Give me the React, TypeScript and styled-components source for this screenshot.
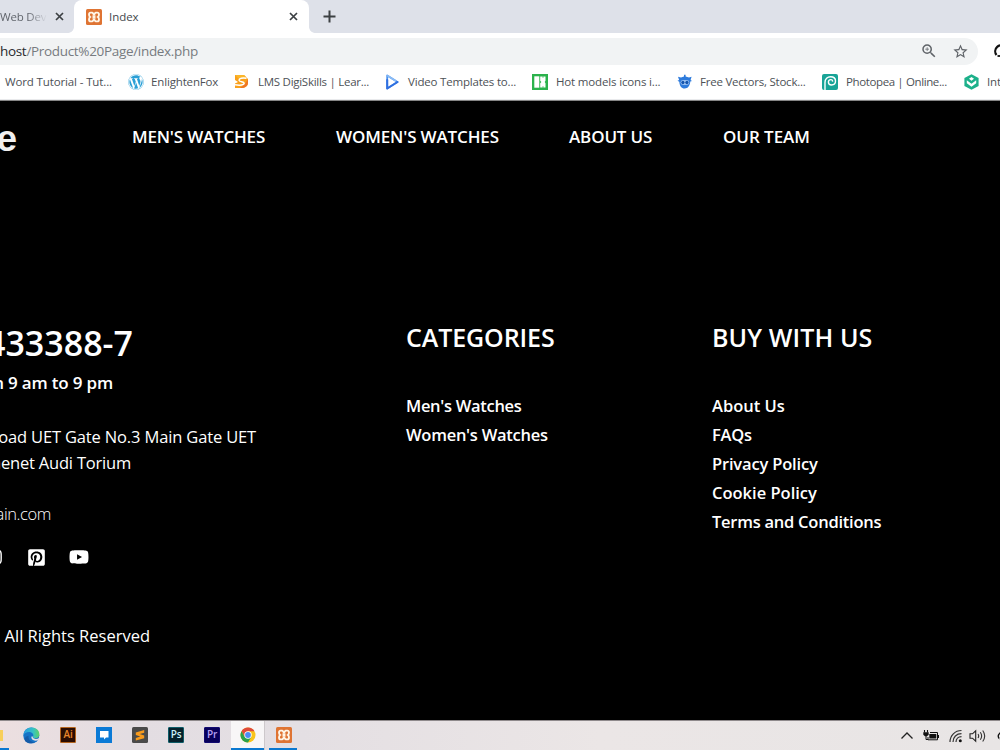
import React from "react";
import styled, { createGlobalStyle } from "styled-components";
import { FaInstagram, FaPinterestSquare, FaYoutube, FaWordpress } from "react-icons/fa";
import { MdOutlineZoomIn, MdStarBorder } from "react-icons/md";

const GlobalStyle = createGlobalStyle`
  * { box-sizing: border-box; }
  body {
    margin: 0;
    overflow: hidden;
    background: #000;
    font-family: "Open Sans", "Noto Sans", sans-serif;
  }
  svg { display: block; flex: none; }
`;

const Screen = styled.div`
  width: 1000px;
  height: 750px;
  display: flex;
  flex-direction: column;
  overflow: hidden;
`;

/* ---------- browser ---------- */

const TabStrip = styled.div`
  height: 33px;
  display: flex;
  background: #dee1e9;
  flex: none;
`;

const Tab = styled.div<{ $active?: boolean; $width: number }>`
  width: ${p => p.$width}px;
  height: 33px;
  display: flex;
  align-items: center;
  padding: ${p => (p.$active ? "0 11px 0 12px" : "0 10px 0 0")};
  background: ${p => (p.$active ? "#fff" : "transparent")};
  border-radius: ${p => (p.$active ? "8px 8px 0 0" : "0")};
  flex: none;
`;

const TabCurve = styled.div<{ $side: "left" | "right" }>`
  width: 6px;
  height: 33px;
  margin-left: ${p => (p.$side === "left" ? "-6px" : "0")};
  background: radial-gradient(circle at ${p => (p.$side === "left" ? "0 0" : "6px 0")}, #dee1e9 5.5px, #fff 6.2px)
    0 27px / 6px 6px no-repeat;
  flex: none;
`;

const TabTitle = styled.span`
  flex: 1;
  margin-left: 7px;
  font-size: 11.5px;
  line-height: 16px;
  letter-spacing: -0.05px;
  white-space: nowrap;
  color: #45494d;
`;

const FadedTitle = styled.span`
  width: 54px;
  font-size: 11.5px;
  line-height: 16px;
  letter-spacing: -0.2px;
  white-space: nowrap;
  color: transparent;
  background: linear-gradient(90deg, #5b5f66 28px, rgba(91, 95, 102, 0) 47px);
  background-clip: text;
  -webkit-background-clip: text;
`;

const Spacer = styled.div`
  flex: 1;
`;

const NewTab = styled.div`
  display: flex;
  align-items: center;
  margin-left: 8px;
`;

const Toolbar = styled.div`
  height: 35px;
  display: flex;
  align-items: center;
  padding-top: 1px;
  background: #fff;
  color: #111;
  flex: none;
`;

const AddressBar = styled.div`
  width: 978px;
  height: 27px;
  display: flex;
  align-items: center;
  gap: 14px;
  padding-right: 9px;
  border-radius: 0 14px 14px 0;
  background: #f1f3f4;
  color: #5f6368;
`;

const Url = styled.span`
  flex: 1;
  font-size: 13.5px;
  line-height: 20px;
  letter-spacing: -0.32px;
  white-space: nowrap;
  color: #777b80;

  b {
    font-weight: 400;
    color: #27292c;
  }
`;

const Profile = styled.div`
  width: 7px;
  margin-left: 15px;
  overflow: hidden;
`;

const Bookmarks = styled.div`
  height: 32px;
  display: flex;
  align-items: center;
  padding: 0 0 4px 5px;
  background: #fff;
  border-bottom: 1px solid #e9eaec;
  flex: none;
  overflow: hidden;
`;

const Bookmark = styled.div<{ $width: number }>`
  width: ${p => p.$width}px;
  display: flex;
  align-items: center;
  flex: none;
`;

const BookmarkIcon = styled.span<{ $width: number }>`
  width: ${p => p.$width}px;
  flex: none;
`;

const BookmarkLabel = styled.span<{ $track: number }>`
  font-size: 11.5px;
  line-height: 16px;
  letter-spacing: ${p => p.$track}px;
  white-space: nowrap;
  color: #4d5156;
`;

/* ---------- web page ---------- */

const Page = styled.div`
  height: 620px;
  display: flex;
  flex-direction: column;
  background: #000;
  border-top: 1px solid #858585;
  color: #fff;
  flex: none;
`;

const Header = styled.header`
  height: 74px;
  display: flex;
  align-items: center;
  flex: none;
`;

const Logo = styled.div`
  width: 17px;
  display: flex;
  justify-content: flex-end;
  padding-top: 1px;
  font: bold 37px/44px "Liberation Sans", sans-serif;
  color: #f0f0f0;
`;

const Nav = styled.nav`
  display: flex;
  margin-left: 115px;
  padding-bottom: 2px;
`;

const NavLink = styled.a<{ $width: number; $track: number }>`
  width: ${p => p.$width}px;
  font-size: 17px;
  font-weight: 600;
  line-height: 24px;
  letter-spacing: ${p => p.$track}px;
  white-space: nowrap;
`;

const Footer = styled.footer`
  display: grid;
  grid-template-columns: 406px 306px 1fr;
  padding-top: 142px;
`;

const Column = styled.div`
  display: flex;
  flex-direction: column;
`;

const ClippedLine = styled.div<{ $end: number; $size: number; $height: number; $weight?: number; $track?: number; $top?: number }>`
  width: ${p => p.$end}px;
  height: ${p => p.$height}px;
  margin-top: ${p => p.$top || 0}px;
  display: flex;
  justify-content: flex-end;
  font-size: ${p => p.$size}px;
  font-weight: ${p => p.$weight || 400};
  line-height: ${p => p.$height}px;
  letter-spacing: ${p => p.$track || 0}px;
  white-space: nowrap;
`;

const Social = styled.div`
  height: 24px;
  margin: 18px 0 0 -15px;
  display: flex;
  align-items: center;
`;

const SocialIcon = styled.span<{ $gap: number }>`
  margin-right: ${p => p.$gap}px;
`;

const Heading = styled.h3<{ $track: number }>`
  height: 34px;
  margin: 3px 0 37px;
  font-size: 25px;
  font-weight: 600;
  line-height: 34px;
  letter-spacing: ${p => p.$track}px;
  white-space: nowrap;
`;

const FooterLink = styled.a<{ $track: number }>`
  height: 29.1px;
  font-size: 16.5px;
  font-weight: 600;
  line-height: 29px;
  letter-spacing: ${p => p.$track}px;
  white-space: nowrap;
`;

/* ---------- taskbar ---------- */

const Taskbar = styled.div`
  height: 30px;
  display: flex;
  background: linear-gradient(90deg, #ecdfe0 0, #e3dde2 130px, #e4dfe3 300px, #ebe6e6 600px, #e8e5e5 100%);
  border-top: 1px solid #8f8a8c;
  color: #222;
  flex: none;
`;

const TaskButton = styled.div<{ $width: number; $state?: "open" | "active"; $pad?: number }>`
  width: ${p => p.$width}px;
  height: 29px;
  padding: 6px 0 0 ${p => p.$pad || 0}px;
  background: ${p => (p.$state === "active" ? "#f8f6f7" : "transparent")};
  border-bottom: 2px solid ${p => (p.$state ? "#0a78d0" : "transparent")};
  flex: none;
  overflow: hidden;
`;

const AppTile = styled.div<{ $bg: string; $fg: string; $line: string }>`
  width: 16px;
  height: 16px;
  border: 1px solid ${p => p.$line};
  border-radius: 1px;
  background: ${p => p.$bg};
  color: ${p => p.$fg};
  font-size: 10px;
  font-weight: 600;
  line-height: 13px;
  letter-spacing: -0.2px;
  text-align: center;
`;

const Divider = styled.div`
  width: 1px;
  height: 29px;
  margin: 0 4px 0 -1px;
  background: #cdc8cb;
`;

const Tray = styled.div`
  display: flex;
  align-items: center;
  height: 29px;
`;

const TrayItem = styled.span<{ $width: number }>`
  width: ${p => p.$width}px;
  overflow: hidden;
  flex: none;
`;

/* ---------- drawings ---------- */

const Close = () => (
  <svg width="9" height="9" viewBox="0 0 9 9">
    <path d="M1 1l7 7M8 1 1 8" stroke="#3c4043" strokeWidth="1.700" />
  </svg>
);

const Plus = () => (
  <svg width="13" height="13" viewBox="0 0 13 13">
    <path d="M6.500.5v12M.5 6.500h12" stroke="#3c4043" strokeWidth="2" />
  </svg>
);

const Xampp = () => (
  <svg width="16" height="16" viewBox="0 0 16 16">
    <rect width="16" height="16" rx="1.500" fill="#df7433" />
    <path
      d="M4.600 3.600h1.500c1 0 1 1.700 1.900 1.700s.9-1.700 1.900-1.700h1.500c2 0 2 3.300.5 4.400 1.500 1.100 1.500 4.400-.5 4.400H9.900c-1 0-1-1.700-1.900-1.700s-.9 1.700-1.900 1.700H4.600c-2 0-2-3.300-.5-4.400-1.500-1.100-1.500-4.400.5-4.400z"
      fill="none"
      stroke="#fff6e8"
      strokeWidth="1.900"
    />
    <path d="M6.500 8h3" stroke="#fff6e8" strokeWidth="3.600" />
  </svg>
);

const DigiSkills = () => (
  <svg width="14" height="15" viewBox="0 0 14 15">
    <path d="M0 1h9l4 4v4c0 3.500-3 5-6 5H0V9.500L3 8 0 6z" fill="#f9a01b" />
    <path d="M0 1h9l2.500 2.500L4 5z" fill="#fbb62a" />
    <path d="M5 14c5 0 8-2 8-6V5l-3 5z" fill="#ee7425" />
    <path d="M11.500 4.300C7.500 3.600 4 4.300 4 6.300c0 2 5.200 1 5.200 3 0 1.800-4.200 2.300-9.200 1.500" fill="none" stroke="#fff" strokeWidth="1.400" />
  </svg>
);

const VideoPlay = () => (
  <svg width="13" height="16" viewBox="0 0 13 16">
    <path d="M1.200 1.500 11.500 8 1.200 14.500z" fill="#fff" stroke="#4b92ee" strokeWidth="1.800" strokeLinejoin="round" />
    <path d="M1.200 14.500V6M1.200 14.500 11.500 8" stroke="#2f6fe0" strokeWidth="2" strokeLinecap="round" />
    <path d="M1.200 1.500 10 7" stroke="#8bbcf5" strokeWidth="1.500" />
  </svg>
);

const Icons8 = () => (
  <svg width="16" height="16" viewBox="0 0 16 16">
    <rect width="16" height="16" fill="#2bb24c" />
    <path d="M2.300 2.300H7.300v11.400H2.300z" fill="#fff" />
    <path d="M8.200 2.500h5.300v4.300L12.700 8l.8 1.200v4.300H8.200V9.200L9.400 8 8.200 6.800z" fill="#fff" />
    <path d="M10.600 2.300h.8v1.500h-.8zM10.600 12.200h.8v1.500h-.8z" fill="#2bb24c" />
  </svg>
);

const Freepik = () => (
  <svg width="16" height="16" viewBox="0 0 16 16">
    <path d="M4 3.500 7 2.600V.800h1.600v1.800l3.400.9 2.600-.7-1 3.200 1.400 1-1.700.6C13 11.800 11 14.600 7.700 14.600S2.600 12 2.300 7.800L.5 6.800l1.600-.9L1 2.800z" fill="#2e7bdc" />
    <rect x="3.600" y="6.200" width="8.600" height="4.600" rx="2.300" fill="#b9d6f8" />
    <circle cx="5.900" cy="8.500" r="1.700" fill="#1556b0" />
    <circle cx="9.900" cy="8.500" r="1.700" fill="#1556b0" />
  </svg>
);

const Photopea = () => (
  <svg width="16" height="16" viewBox="0 0 16 16">
    <rect width="16" height="16" rx="2" fill="#18a497" />
    <path
      d="M3 16V8.500C3 4.800 5.400 2.800 8.600 2.800c2.900 0 4.900 1.800 4.900 4.300S11.700 11 9.500 11 6.400 9.700 6.400 8.100 7.500 5.600 8.800 5.600s1.900.8 1.700 2"
      fill="none"
      stroke="#fff"
      strokeWidth="1.400"
    />
  </svg>
);

const Hexagon = () => (
  <svg width="15" height="16" viewBox="0 0 15 16">
    <path d="M7.500.3 14.600 4v8l-7.100 3.700L.4 12V4z" fill="#1cb08a" />
    <path d="M7.500 3 10 4.800 7.500 6.800 5 4.800zM2.800 6.200l4.700 3.500 4.700-3.500v3l-4.700 3.600-4.700-3.600z" fill="#fff" />
  </svg>
);

const Edge = () => (
  <svg width="17" height="17" viewBox="0 0 17 17">
    <defs>
      <linearGradient id="edgeTop" x1="0" x2="1">
        <stop offset="0" stopColor="#2a9be0" />
        <stop offset=".6" stopColor="#35c1c6" />
        <stop offset="1" stopColor="#5fd264" />
      </linearGradient>
    </defs>
    <circle cx="8.300" cy="8.500" r="8" fill="#1673c6" />
    <path d="M.5 8C.8 3.400 4.200.5 8.400.5c4.800 0 8 3.300 8 6.800 0 2.600-1.800 3.900-4 3.900-1.900 0-2.700-.7-2.400-1.400C11.400 7.200 9 5 6 5 3.300 5 1.300 6.400.5 8z" fill="url(#edgeTop)" />
    <path d="M5.500 8.700c-.6 4 2.600 6.500 6 6.300-2.600 1.800-6 1.800-8.300 0-2.700-2.200-1.500-5.600 2.300-6.300z" fill="#155ba8" />
    <path d="M9.900 9.600c-.6 1 .5 2.300 2.800 2.300 1.300 0 2.500-.4 3.800-1.200l-1.200 2.400c-4 1.600-7.600-.5-6.800-3.500z" fill="#e3dde2" />
  </svg>
);

const ChatTile = () => (
  <svg width="16" height="16" viewBox="0 0 16 16">
    <rect width="16" height="16" fill="#0a7ad6" />
    <path d="M4 4h8.500v6.500H10L8 12.600v-2.100H4z" fill="#fff" />
  </svg>
);

const Sublime = () => (
  <svg width="16" height="16" viewBox="0 0 16 16">
    <rect width="16" height="16" rx="1.500" fill="#4a4a4a" />
    <path d="M12.200 3v2.700L7.800 7l4.400 1.400v2.800L3.800 13.600v-2.700l4.500-1.400L3.800 8.100V5.400z" fill="#f99b1c" />
  </svg>
);

const Chrome = () => (
  <svg width="16" height="16" viewBox="0 0 16 16">
    <circle cx="8" cy="8" r="7.500" fill="#f9c41b" />
    <path d="M1.500 4.250A7.500 7.500 0 0 1 14.500 4.250H8L4.750 9.900z" fill="#e04a3a" />
    <path d="M1.500 4.250A7.500 7.500 0 0 0 8 15.500L11.250 9.900H4.750z" fill="#2ba24c" />
    <circle cx="8" cy="8" r="3.700" fill="#fff" />
    <circle cx="8" cy="8" r="2.900" fill="#4c8bf5" />
  </svg>
);

const Chevron = () => (
  <svg width="14" height="16" viewBox="0 0 14 16">
    <path d="M1.500 10.500 7 5l5.500 5.500" fill="none" stroke="#222" strokeWidth="1.300" />
  </svg>
);

const Battery = () => (
  <svg width="16" height="12" viewBox="0 0 16 12">
    <path d="M1.500 0v2.500M4.500 0v2.500" stroke="#111" strokeWidth="1.100" />
    <path d="M.3 2.300h5.400v2.400L4 6.300H2L.3 4.700z" fill="#111" />
    <path d="M3 6v3.500h2" fill="none" stroke="#111" />
    <path d="M7 2.500h7.500v7.300H5V7" fill="none" stroke="#111" />
    <rect x="6.300" y="4" width="7" height="4.500" fill="#111" />
    <path d="M15.500 5v3" stroke="#111" />
  </svg>
);

const Wifi = () => (
  <svg width="14" height="14" viewBox="0 0 14 14">
    <path d="M1 13C1 6.500 6 1.500 12.500 1.500M4 13c0-5 3.500-8.300 8.500-8.300M7 13c0-3.300 2.200-5.300 5.500-5.300" fill="none" stroke="#333" strokeWidth="1.200" />
    <circle cx="11.300" cy="11.700" r="1.500" fill="#111" />
  </svg>
);

const Volume = () => (
  <svg width="18" height="14" viewBox="0 0 18 14">
    <path d="M1 4.800h2.500L6.700 1.800v10.400L3.500 9.200H1z" fill="none" stroke="#222" strokeWidth="1.100" />
    <path d="M9 5q1.400 2 0 4M11.300 3.200q2.700 3.800 0 7.600M13.700 1.500q4 5.500 0 11" fill="none" stroke="#333" strokeWidth="1.100" />
  </svg>
);

const Ring = ({ size }: { size: number }) => (
  <svg width={size} height={size} viewBox="0 0 16 16">
    <path d="M3.500 12A6 6 0 1 1 13 12" fill="none" stroke="#111" strokeWidth="2.200" />
    <path d="M7.500 13H4.500" stroke="#111" strokeWidth="1.800" />
  </svg>
);

const bookmarks = [
  { label: "Word Tutorial - Tut...", width: 123, track: -0.13, icon: null, iconWidth: 0 },
  { label: "EnlightenFox", width: 107, track: -0.15, icon: <FaWordpress size={16} color="#2a9fd6" />, iconWidth: 23 },
  { label: "LMS DigiSkills | Lear...", width: 151, track: -0.27, icon: <DigiSkills />, iconWidth: 23 },
  { label: "Video Templates to...", width: 146, track: -0.19, icon: <VideoPlay />, iconWidth: 22 },
  { label: "Hot models icons i...", width: 145, track: -0.16, icon: <Icons8 />, iconWidth: 24 },
  { label: "Free Vectors, Stock...", width: 145, track: -0.22, icon: <Freepik />, iconWidth: 23 },
  { label: "Photopea | Online...", width: 142, track: -0.38, icon: <Photopea />, iconWidth: 24 },
  { label: "Int", width: 60, track: -0.1, icon: <Hexagon />, iconWidth: 23 },
];

const navLinks = [
  { label: "MEN'S WATCHES", width: 204, track: -0.2 },
  { label: "WOMEN'S WATCHES", width: 233, track: -0.15 },
  { label: "ABOUT US", width: 154, track: -0.15 },
  { label: "OUR TEAM", width: 90, track: -0.05 },
];

const categories = [
  { label: "Men's Watches", track: -0.3 },
  { label: "Women's Watches", track: -0.26 },
];

const policies = [
  { label: "About Us", track: 0 },
  { label: "FAQs", track: -0.2 },
  { label: "Privacy Policy", track: -0.17 },
  { label: "Cookie Policy", track: 0 },
  { label: "Terms and Conditions", track: -0.25 },
];

export default function App() {
  return (
    <Screen>
      <GlobalStyle />
      <TabStrip>
        <Tab $width={74}>
          <FadedTitle>Web Dev</FadedTitle>
          <Spacer />
          <Close />
        </Tab>
        <TabCurve $side="left" />
        <Tab $active $width={235}>
          <Xampp />
          <TabTitle>Index</TabTitle>
          <Close />
        </Tab>
        <TabCurve $side="right" />
        <NewTab>
          <Plus />
        </NewTab>
      </TabStrip>
      <Toolbar>
        <AddressBar>
          <Url>
            <b>host</b>/Product%20Page/index.php
          </Url>
          <MdOutlineZoomIn size={18} />
          <MdStarBorder size={17} />
        </AddressBar>
        <Profile>
          <Ring size={16} />
        </Profile>
      </Toolbar>
      <Bookmarks>
        {bookmarks.map(b => (
          <Bookmark key={b.label} $width={b.width}>
            {b.icon && <BookmarkIcon $width={b.iconWidth}>{b.icon}</BookmarkIcon>}
            <BookmarkLabel $track={b.track}>{b.label}</BookmarkLabel>
          </Bookmark>
        ))}
      </Bookmarks>

      <Page>
        <Header>
          <Logo>e</Logo>
          <Nav>
            {navLinks.map(n => (
              <NavLink key={n.label} $width={n.width} $track={n.track}>
                {n.label}
              </NavLink>
            ))}
          </Nav>
        </Header>
        <Footer>
          <Column>
            <ClippedLine $end={133} $size={34} $height={46} $weight={600} $top={3}>433388-7</ClippedLine>
            <ClippedLine $end={113} $size={17} $height={26} $weight={600} $track={-0.18} $top={4}>n 9 am to 9 pm</ClippedLine>
            <ClippedLine $end={256} $size={16.5} $height={26} $track={-0.15} $top={28}>oad UET Gate No.3 Main Gate UET</ClippedLine>
            <ClippedLine $end={131} $size={16.5} $height={26} $track={-0.2}>nenet Audi Torium</ClippedLine>
            <ClippedLine $end={51} $size={16.5} $height={26} $weight={300} $track={-0.4} $top={25}>ain.com</ClippedLine>
            <Social>
              <SocialIcon $gap={24}><FaInstagram size={18} /></SocialIcon>
              <SocialIcon $gap={23}><FaPinterestSquare size={19} /></SocialIcon>
              <SocialIcon $gap={0}><FaYoutube size={20} /></SocialIcon>
            </Social>
            <ClippedLine $end={150} $size={16.5} $height={26} $top={54}>. All Rights Reserved</ClippedLine>
          </Column>
          <Column>
            <Heading $track={-0.1}>CATEGORIES</Heading>
            {categories.map(c => (
              <FooterLink key={c.label} $track={c.track}>{c.label}</FooterLink>
            ))}
          </Column>
          <Column>
            <Heading $track={0.1}>BUY WITH US</Heading>
            {policies.map(c => (
              <FooterLink key={c.label} $track={c.track}>{c.label}</FooterLink>
            ))}
          </Column>
        </Footer>
      </Page>

      <Taskbar>
        <TaskButton $width={9} $state="open">
          <svg width="3" height="16" viewBox="0 0 3 16">
            <path d="M0 3h3v11H0z" fill="#f8cf5a" />
          </svg>
        </TaskButton>
        <TaskButton $width={51} $pad={14}><Edge /></TaskButton>
        <TaskButton $width={36}><AppTile $bg="#2b0d02" $fg="#e8862a" $line="#b5651d">Ai</AppTile></TaskButton>
        <TaskButton $width={36}><ChatTile /></TaskButton>
        <TaskButton $width={36}><Sublime /></TaskButton>
        <TaskButton $width={36}><AppTile $bg="#04202b" $fg="#c9f1fa" $line="#0c5c68">Ps</AppTile></TaskButton>
        <TaskButton $width={27}><AppTile $bg="#08005a" $fg="#b8a2f5" $line="#120a70">Pr</AppTile></TaskButton>
        <TaskButton $width={34} $pad={9} $state="active"><Chrome /></TaskButton>
        <Divider />
        <TaskButton $width={28} $pad={7} $state="open"><Xampp /></TaskButton>
        <Spacer />
        <Tray>
          <TrayItem $width={23}><Chevron /></TrayItem>
          <TrayItem $width={26}><Battery /></TrayItem>
          <TrayItem $width={20}><Wifi /></TrayItem>
          <TrayItem $width={28}><Volume /></TrayItem>
          <TrayItem $width={3}><Ring size={10} /></TrayItem>
        </Tray>
      </Taskbar>
    </Screen>
  );
}
